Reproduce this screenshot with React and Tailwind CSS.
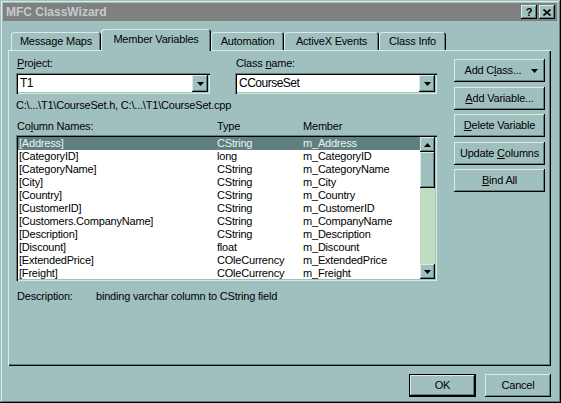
import React from 'react';

const raised =
  'shadow-[inset_-1px_-1px_0_#000,inset_1px_1px_0_#d8ece4,inset_-2px_-2px_0_#608080]';
const sunken =
  'shadow-[inset_1px_1px_0_#608080,inset_2px_2px_0_#000,inset_-1px_-1px_0_#d8ece4,inset_-2px_-2px_0_#a0c0c0]';

const rows = [
  ['[Address]', 'CString', 'm_Address'],
  ['[CategoryID]', 'long', 'm_CategoryID'],
  ['[CategoryName]', 'CString', 'm_CategoryName'],
  ['[City]', 'CString', 'm_City'],
  ['[Country]', 'CString', 'm_Country'],
  ['[CustomerID]', 'CString', 'm_CustomerID'],
  ['[Customers.CompanyName]', 'CString', 'm_CompanyName'],
  ['[Description]', 'CString', 'm_Description'],
  ['[Discount]', 'float', 'm_Discount'],
  ['[ExtendedPrice]', 'COleCurrency', 'm_ExtendedPrice'],
  ['[Freight]', 'COleCurrency', 'm_Freight'],
];

const Tri = ({ up }) => (
  <svg width="7" height="4" viewBox="0 0 7 4">
    <path d={up ? 'M3.5 0 L7 4 L0 4 Z' : 'M0 0 L7 0 L3.5 4 Z'} fill="#000" />
  </svg>
);

const Combo = ({ value }) => (
  <div className={`h-[21px] bg-white flex items-stretch p-[2px] ${sunken}`}>
    <div className="flex-1 flex items-center pl-[2px] text-[12px] tracking-[-0.5px]">{value}</div>
    <div className={`w-[16px] bg-[#a0c0c0] flex items-center justify-center ${raised}`}>
      <Tri />
    </div>
  </div>
);

const Btn = ({ children }) => (
  <div className={`h-[23px] bg-[#a0c0c0] flex items-center justify-center ${raised}`}>{children}</div>
);

const U = ({ children }) => <span className="underline underline-offset-[1px]">{children}</span>;

const Tab = ({ label, w, active }) => (
  <div
    className={`${w} bg-[#a0c0c0] rounded-t-[3px] flex items-center justify-center shadow-[inset_1px_1px_0_#d8ece4,inset_-1px_0_0_#000,inset_-2px_0_0_#608080] ${
      active ? 'h-[22px] -mb-[1px] relative z-10 pb-[2px]' : 'h-[18px]'
    }`}
  >
    {label}
  </div>
);

export default function App() {
  return (
    <div className="w-[561px] h-[403px] bg-[#a0c0c0] p-[3px] font-['Liberation_Sans',Arial,sans-serif] text-[11px] leading-[13px] tracking-[-0.2px] text-black shadow-[inset_-1px_-1px_0_#000,inset_1px_1px_0_#a0c0c0,inset_-2px_-2px_0_#608080,inset_2px_2px_0_#d8ece4]">
      {/* Title bar */}
      <div className="h-[18px] w-[554px] bg-[#808080] flex items-center pl-[3px] pr-[2px]">
        <span className="font-bold text-[12px] tracking-normal text-[#c4cccc]">MFC ClassWizard</span>
        <div className="ml-auto flex gap-[2px]">
          <div className={`w-[16px] h-[14px] bg-[#a0c0c0] flex items-center justify-center font-bold text-[11px] leading-none ${raised}`}>?</div>
          <div className={`w-[16px] h-[14px] bg-[#a0c0c0] flex items-center justify-center ${raised}`}>
            <svg width="8" height="7" viewBox="0 0 8 7">
              <path d="M0.5 0.5 L7.5 6.5 M7.5 0.5 L0.5 6.5" stroke="#000" strokeWidth="1.6" />
            </svg>
          </div>
        </div>
      </div>

      {/* Tabs */}
      <div className="mt-[8px] h-[21px] flex items-end pl-[8px]">
        <Tab label="Message Maps" w="w-[90px]" />
        <Tab label="Member Variables" w="w-[110px]" active />
        <Tab label="Automation" w="w-[73px]" />
        <Tab label="ActiveX Events" w="w-[95px]" />
        <Tab label="Class Info" w="w-[67px]" />
      </div>

      {/* Tab panel */}
      <div className="ml-[5px] w-[543px] h-[316px] flex pl-[8px] pt-[7px] shadow-[inset_1px_1px_0_#d8ece4,inset_-1px_-1px_0_#000,inset_-2px_-2px_0_#608080]">
        <div className="w-[421px] flex flex-col">
          <div className="flex gap-[25px]">
            <div className="w-[194px]">
              <div className="pl-[1px]"><U>P</U>roject:</div>
              <div className="mt-[3px]"><Combo value="T1" /></div>
            </div>
            <div className="w-[202px]">
              <div className="pl-[1px]">Class <U>n</U>ame:</div>
              <div className="mt-[3px]"><Combo value="CCourseSet" /></div>
            </div>
          </div>
          <div className="mt-[5px]">{'C:\\...\\T1\\CourseSet.h, C:\\...\\T1\\CourseSet.cpp'}</div>
          <div className="mt-[8px] flex">
            <div className="w-[201px] pl-[1px]">Co<U>l</U>umn Names:</div>
            <div className="w-[86px]">Type</div>
            <div>Member</div>
          </div>
          <div className={`mt-[2px] h-[146px] bg-white flex p-[2px] ${sunken}`}>
            <div className="flex-1 overflow-hidden">
              {rows.map((r, i) => (
                <div
                  key={i}
                  className={`h-[13px] flex ${i === 0 ? 'bg-[#608080] text-[#e8f4f0]' : ''}`}
                >
                  <div className="w-[199px] pl-[1px] whitespace-nowrap">{r[0]}</div>
                  <div className="w-[86px]">{r[1]}</div>
                  <div>{r[2]}</div>
                </div>
              ))}
            </div>
            <div className="w-[15px] bg-[#c0dcc0] flex flex-col">
              <div className={`h-[15px] bg-[#a0c0c0] flex items-center justify-center ${raised}`}><Tri up /></div>
              <div className={`h-[36px] bg-[#a0c0c0] ${raised}`} />
              <div className="flex-1" />
              <div className={`h-[15px] bg-[#a0c0c0] flex items-center justify-center ${raised}`}><Tri /></div>
            </div>
          </div>
          <div className="mt-[9px] flex">
            <div className="w-[80px] pl-[1px]">Description:</div>
            <div>binding varchar column to CString field</div>
          </div>
        </div>

        <div className="ml-[17px] w-[91px] mt-[2px] flex flex-col gap-[4.5px]">
          <Btn>
            <span className="ml-[4px]">Add C<U>l</U>ass...</span>
            <span className="ml-[10px]"><Tri /></span>
          </Btn>
          <Btn><span><U>A</U>dd Variable...</span></Btn>
          <Btn><span><U>D</U>elete Variable</span></Btn>
          <Btn><span>Update <U>C</U>olumns</span></Btn>
          <Btn><span><U>B</U>ind All</span></Btn>
        </div>
      </div>

      {/* Bottom buttons */}
      <div className="mt-[8px] flex justify-end gap-[9px] pr-[7px]">
        <div className="w-[67px] h-[23px] border border-black">
          <div className={`h-full bg-[#a0c0c0] flex items-center justify-center ${raised}`}>OK</div>
        </div>
        <div className={`w-[66px] h-[23px] bg-[#a0c0c0] flex items-center justify-center ${raised}`}>Cancel</div>
      </div>
    </div>
  );
}
